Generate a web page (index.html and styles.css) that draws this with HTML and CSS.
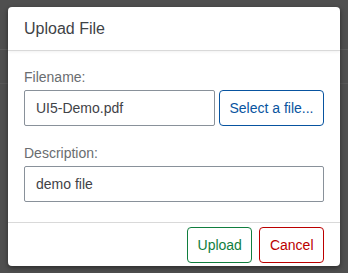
FILE: index.html
```html
<!DOCTYPE html>
<html lang="en">
<head>
    <meta charset="UTF-8">
    <meta name="viewport" content="width=device-width, initial-scale=1.0">
    <title>Upload File</title>
    <link rel="stylesheet" href="styles.css">
</head>
<body>
    <div class="dialog">
        <div class="dialog-header">
            <h1 class="dialog-title">Upload File</h1>
        </div>

        <form class="dialog-content" id="uploadForm">
            <label class="field-label" for="filename">Filename:</label>
            <div class="file-row">
                <input type="text" id="filename" class="text-input" value="UI5-Demo.pdf">
                <button type="button" class="btn btn-select">Select a file...</button>
            </div>

            <label class="field-label label-gap" for="description">Description:</label>
            <input type="text" id="description" class="text-input" value="demo file">
        </form>

        <div class="dialog-footer">
            <button type="submit" form="uploadForm" class="btn btn-accept">Upload</button>
            <button type="button" class="btn btn-reject">Cancel</button>
        </div>
    </div>
</body>
</html>
```

FILE: styles.css
```css
* {
    margin: 0;
    padding: 0;
    box-sizing: border-box;
}

body {
    font-family: 'Liberation Sans', Arial, sans-serif;
    background:
        linear-gradient(#5c5c5c, #5c5c5c) 0 49px / 100% 1px no-repeat,
        linear-gradient(#585858, #585858) 0 83px / 100% 1px no-repeat,
        #4f4f4f;
    width: 348px;
    height: 273px;
    padding: 7px 8px;
    overflow: hidden;
}

.dialog {
    background: white;
    border-radius: 4px;
    width: 332px;
    height: 259px;
    box-shadow: 0 2px 5px rgba(0,0,0,0.45);
    display: flex;
    flex-direction: column;
}

.dialog-header {
    height: 44px;
    padding: 0 16px;
    display: flex;
    align-items: center;
    border-bottom: 1px solid #d9d9d9;
    box-shadow: 0 1px 3px rgba(0,0,0,0.06);
}

.dialog-title {
    font-size: 16px;
    font-weight: normal;
    color: #3f4347;
}

.dialog-content {
    padding: 16px 16px 20px;
    display: flex;
    flex-direction: column;
}

.field-label {
    display: block;
    font-size: 14px;
    line-height: 20px;
    color: #6a6d70;
    margin-bottom: 3px;
}

.label-gap {
    margin-top: 17px;
}

.file-row {
    display: flex;
    gap: 4px;
}

.text-input {
    width: 100%;
    height: 36px;
    padding: 0 11px;
    border: 1px solid #89919a;
    border-radius: 2px;
    font-family: inherit;
    font-size: 14px;
    color: #3f4347;
    background: white;
}

.file-row .text-input {
    flex: 1;
}

.text-input:focus {
    outline: none;
    border-color: #0854a0;
}

.btn {
    height: 36px;
    padding: 0 9.5px;
    border: 1px solid;
    border-radius: 4px;
    background: white;
    font-family: inherit;
    font-size: 14px;
    cursor: pointer;
    white-space: nowrap;
}

.btn-select {
    color: #0854a0;
    border-color: #0854a0;
}

.btn-accept {
    color: #107e3e;
    border-color: #107e3e;
}

.btn-reject {
    color: #bb0000;
    border-color: #bb0000;
}

.dialog-footer {
    border-top: 1px solid #d9d9d9;
    height: 44px;
    padding: 0 16px;
    display: flex;
    align-items: center;
    justify-content: flex-end;
    gap: 7px;
}
```
